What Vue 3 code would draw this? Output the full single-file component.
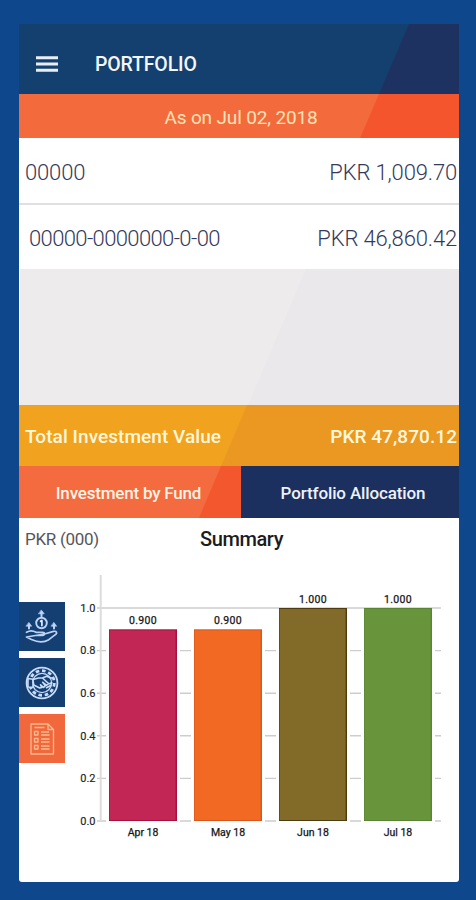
<script setup>
const accounts = [
  { id: '00000', value: 'PKR 1,009.70' },
  { id: '00000-0000000-0-00', value: 'PKR 46,860.42', nested: true },
]
const base = 821
const full = 213
const ticks = [0, 0.2, 0.4, 0.6, 0.8, 1].map((v) => ({ label: v.toFixed(1), y: base - v * full }))
const bars = [
  { label: 'Apr 18', value: 0.9, x: 109, color: '#c12654', edge: '#a80f3c' },
  { label: 'May 18', value: 0.9, x: 194, color: '#f16922', edge: '#d9561a' },
  { label: 'Jun 18', value: 1, x: 279, color: '#826b28', edge: '#4d3c10' },
  { label: 'Jul 18', value: 1, x: 364, color: '#68953b', edge: '#5a8433' },
].map((b) => ({ ...b, h: b.value * full, y: base - b.value * full }))
</script>

<template>
  <div class="page">
    <main class="phone">
      <header class="bar">
        <svg class="menu" width="22" height="16" viewBox="0 0 22 16">
          <path d="M0 1.8h22M0 8h22M0 14.2h22" stroke="#e9edf4" stroke-width="3" />
        </svg>
        <h1>PORTFOLIO</h1>
      </header>
      <div class="date"><span>As on Jul 02, 2018</span></div>
      <section class="accounts">
        <div v-for="a in accounts" :key="a.id" class="account" :class="{ nested: a.nested }">
          <span class="acc-id">{{ a.id }}</span><span class="acc-value">{{ a.value }}</span>
        </div>
      </section>
      <div class="filler"></div>
      <div class="total"><span>Total Investment Value</span><span>PKR 47,870.12</span></div>
      <nav class="tabs">
        <div class="tab fund"><span>Investment by Fund</span></div>
        <div class="tab allocation"><span>Portfolio Allocation</span></div>
      </nav>
      <section class="summary">
        <div class="heading"><span class="unit">PKR (000)</span><h2>Summary</h2></div>
        <div class="content">
          <aside class="shortcuts">
            <div class="shortcut">
              <svg width="36" height="36" viewBox="0 0 36 36" fill="none" stroke="#bdd3f6" stroke-width="1.7" stroke-linejoin="round" stroke-linecap="round">
                <circle cx="17.5" cy="14" r="5.3" stroke-width="1.9" />
                <path d="M16.6 12.3l1.3-.9v5.2" stroke="#e6efff" />
                <path d="M17.5 7.5V3M5 19.5v-4M30 19.5v-4" stroke-width="2" />
                <path d="M17.5 1.2l2.8 3.6h-5.6zM5 13.6l2.7 3.6H2.3zM30 13.6l2.7 3.6h-5.4z" fill="#bdd3f6" stroke-width=".6" />
                <path d="M2.5 23.3c3-1.8 6.500-1.800 9.500 0h6.500c2.600 0 2.600 3 0 3h-5.500M20.500 25l9-2.600c3-.7 4.300 1.500 1.800 3.300l-6.500 5c-4.800 2.800-11 2.600-17.300-.2L2.500 28z" />
              </svg>
            </div>
            <div class="shortcut">
              <svg width="36" height="36" viewBox="0 0 36 36" fill="none" stroke="#c9dcf8" stroke-width="1.6" stroke-linejoin="round">
                <circle cx="18" cy="18" r="15.400" stroke-width="1.8" />
                <circle cx="18" cy="18" r="12.300" stroke-width="2.800" stroke-dasharray="3.600 2.800" />
                <circle cx="18" cy="18" r="9.600" stroke-width="1.200" />
                <path d="M4 13.500l5 .8v8L4 22z" fill="#133f73" />
                <path d="M9 14.500l5.500-1.500h4l6 5.500-1.800 1.800-4-3 2.600 3.500-1.800 1.500-3-2.500 1.200 2.700-2 .5-6-3z" fill="#133f73" />
                <path d="M18.500 13l4-1.800 5.500 2M24.500 19l4-1.500M22 23l5.500-3" />
              </svg>
            </div>
            <div class="shortcut active">
              <svg width="36" height="36" viewBox="0 0 36 36" fill="none" stroke="#ffb98f" stroke-width="1.300" stroke-linejoin="round">
                <path d="M7 3h17l5.500 5.500V33H7zM24 3v5.500h5.500" />
                <path d="M10.500 6.500h10M17 11h8M17 14h8.500M17 18h8.500M17 21h8.500M17 25h8.500M17 28h8.500" />
                <path d="M10.500 10.500h3.500V14h-3.500zM10.500 17.500h3.500V21h-3.500zM10.500 24.500h3.500V28h-3.500z" />
              </svg>
            </div>
          </aside>
          <svg class="chart" width="393" height="304" viewBox="66 568 393 304">
            <line v-for="t in ticks" :key="t.label" x1="97" x2="441" :y1="t.y" :y2="t.y" stroke="#cdcdcd" stroke-width="1.4" />
            <line x1="100.7" x2="100.7" y1="575" :y2="base" stroke="#dcdcdc" stroke-width="2" />
            <text v-for="t in ticks" :key="t.label" class="tick" x="95.5" :y="t.y + 3.8">{{ t.label }}</text>
            <g v-for="b in bars" :key="b.label">
              <rect :x="b.x - 3" :y="b.y + 2" width="74" :height="b.h" fill="#fff" />
              <rect :x="b.x" :y="b.y" width="68" :height="b.h" :fill="b.edge" />
              <rect :x="b.x + 0.6" :y="b.y + 1" width="66" :height="b.h - 2" :fill="b.color" />
              <text class="label amount" :x="b.x + 34" :y="b.y - 5">{{ b.value.toFixed(3) }}</text>
              <text class="label" :x="b.x + 34" :y="base + 14.6">{{ b.label }}</text>
            </g>
          </svg>
        </div>
      </section>
    </main>
  </div>
</template>

<style>
body { background: #0f478c; }
</style>
<style scoped>
.page { box-sizing: border-box; height: 900px; padding: 24px 17px 18px 19px; background: #0f478c; font-family: Roboto, "Liberation Sans", sans-serif; }
.phone { height: 858px; display: flex; flex-direction: column; background: #fff; border-radius: 0 0 3px 3px; overflow: hidden; }
h1, h2 { margin: 0; }
span, h1, h2 { white-space: nowrap; }
.bar, .date, .filler, .total, .fund { position: relative; display: flex; align-items: center; }
.bar::before, .date::before, .filler::before, .total::before, .fund::before { content: ''; position: absolute; inset: 0; }
.bar > *, .date > *, .total > *, .fund > * { position: relative; }
.bar { height: 70px; box-sizing: border-box; padding: 10px 16px 0 17px; gap: 37px; background: #14406f; }
.bar::before { background: #1e3261; clip-path: polygon(390px 0, 100% 0, 100% 100%, 360px 100%); }
h1 { color: #f4f6fa; font-size: 19.5px; font-weight: 500; letter-spacing: -.15px; }
.date { height: 44px; box-sizing: border-box; justify-content: center; padding: 2px 0 0 4px; background: #f36b3c; color: #ffe1b4; font-size: 19px; letter-spacing: -.15px; }
.date::before { background: #f5552d; clip-path: polygon(360px 0, 100% 0, 100% 100%, 341px 100%); }
.account { height: 65px; box-sizing: border-box; padding: 4px 2px 0 6px; display: flex; align-items: center; justify-content: space-between; color: #35395a; font-size: 22px; font-weight: 300; letter-spacing: -.15px; }
.account:first-child { border-bottom: 2px solid #e0dfe1; height: 67px; }
.account.nested { padding: 2px 2px 0 10px; height: 64px; }
.nested .acc-id { letter-spacing: -.62px; }
.filler { height: 136px; margin-left: 1px; background: #edebec; }
.filler::before { background: #eae8ea; clip-path: polygon(286px 0, 100% 0, 100% 100%, 228px 100%); }
.total { height: 61px; box-sizing: border-box; padding: 2px 2px 0 6px; justify-content: space-between; background: #f1a31f; color: #fff7dc; font-size: 19px; font-weight: 500; letter-spacing: .06px; }
.total::before { background: #eb9822; clip-path: polygon(228px 0, 100% 0, 100% 100%, 202px 100%); }
.tabs { display: flex; height: 52px; }
.tab { display: flex; align-items: center; justify-content: center; color: #fff3e4; font-size: 17px; font-weight: 500; letter-spacing: -.2px; padding-top: 2px; box-sizing: border-box; }
.fund { width: 222px; padding-right: 3px; background: #f36b3f; }
.fund::before { background: #f3572d; clip-path: polygon(202px 0, 100% 0, 100% 100%, 180px 100%); }
.allocation { flex: 1; padding-left: 6px; background: #1b305f; color: #eef1f8; letter-spacing: -.13px; }
.summary { flex: 1; }
.heading { height: 50px; box-sizing: border-box; padding: 9px 6px 0; display: grid; grid-template-columns: 175px 1fr; align-items: start; }
.unit { color: #55565a; font-size: 17px; line-height: 24px; letter-spacing: -.3px; }
h2 { color: #1c1c1e; font-size: 20px; font-weight: 500; line-height: 24px; letter-spacing: -.4px; }
.content { display: flex; }
.shortcuts { width: 47px; padding-top: 34px; display: flex; flex-direction: column; gap: 7px; }
.shortcut { height: 49px; width: 46px; display: flex; align-items: center; justify-content: center; background: #133f73; }
.active { background: #f0683b; }
.chart { display: block; }
.tick { font-size: 11px; fill: #222; stroke: #222; stroke-width: .15px; text-anchor: end; }
.label { font-size: 10.5px; fill: #151515; stroke: #151515; stroke-width: .25px; text-anchor: middle; }
.amount { letter-spacing: .3px; }
</style>
